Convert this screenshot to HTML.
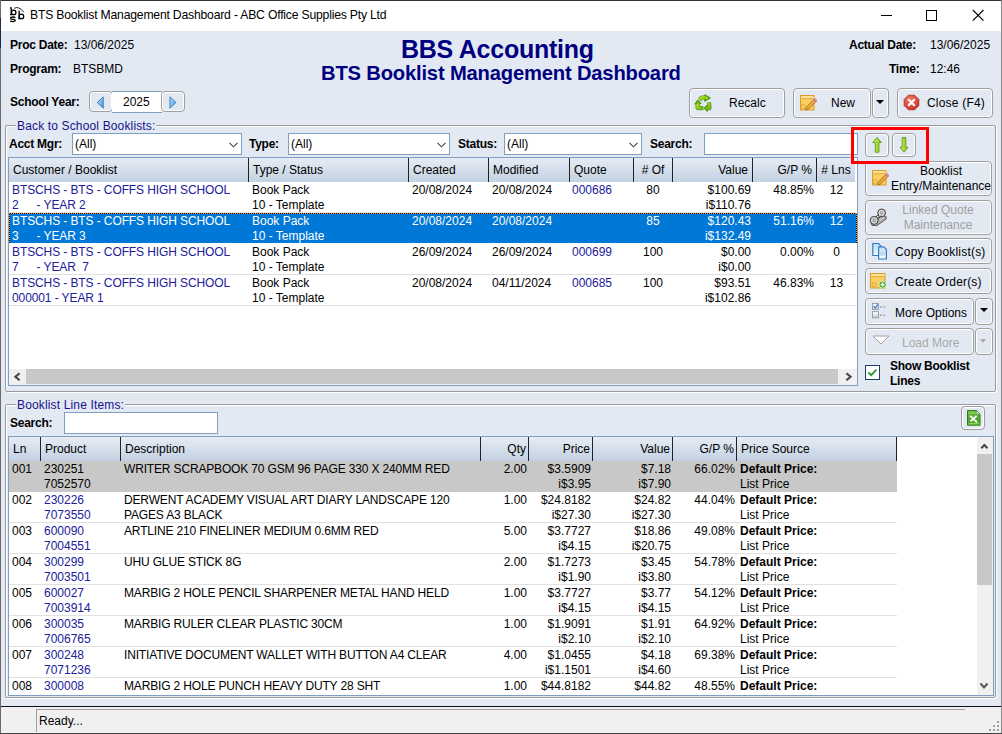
<!DOCTYPE html>
<html><head><meta charset="utf-8">
<style>
*{box-sizing:border-box;margin:0;padding:0}
html,body{width:1002px;height:734px;overflow:hidden;background:#3b4a5a}
body{position:relative;font-family:"Liberation Sans",sans-serif;font-size:12px;line-height:15px;color:#000}
.a{position:absolute;white-space:nowrap;margin-top:1px}
.bx{position:absolute}
.b{font-weight:bold;letter-spacing:-0.25px}
.navy{color:#000080}
.btn{position:absolute;border:1px solid #9E9E9E;border-radius:4px;background:#E3E9F3;box-shadow:inset 0 0 0 1px #fff}
.tb{position:absolute;background:#fff;border:1px solid #7E9EC2}
.grp{position:absolute;border:1px solid #9A9A9A;border-radius:2px;box-shadow:1px 1px 0 #fff,inset 1px 1px 0 #fff}
.cap{position:absolute;background:#E3E9F3;color:#14148C;padding:0 1px;line-height:15px;letter-spacing:0.15px}
.hdr{position:absolute;background:linear-gradient(#E6ECF4,#C3D1E2)}
.sep{position:absolute;width:1px;background:#222}
.r{text-align:right}
.c{text-align:center}
.blue{color:#20209A}
.dd{position:absolute;width:0;height:0;border-left:4px solid transparent;border-right:4px solid transparent;border-top:4px solid #000}
</style></head><body>
<div class="bx" style="left:0;top:0;width:1002px;height:1px;background:#333"></div>
<div class="bx" style="left:0;top:0;width:1px;height:734px;background:#6A6A6A"></div>
<div class="bx" style="left:0;top:18px;width:1px;height:30px;background:#1C2C4C"></div>
<div class="bx" style="left:1001px;top:0;width:1px;height:734px;background:#888"></div>
<div class="bx" style="left:0;top:733px;width:1002px;height:1px;background:#444"></div>
<!-- title bar -->
<div class="bx" style="left:1px;top:1px;width:1000px;height:30px;background:#fff"></div>
<svg class="bx" style="left:0;top:0" width="30" height="30" viewBox="0 0 30 30">
 <g fill="none" stroke="#000" stroke-width="1.3">
 <path d="M10 7.8 H11.2 V14.6 H10"/>
 <circle cx="13.7" cy="12.4" r="2.2"/>
 <circle cx="21.4" cy="16.4" r="2.3"/>
 <path d="M18.4 11.3 H19.2 V18.7 H18.2"/>
 <path d="M15.4 17.8 Q14.6 17 12.9 17 Q10.6 17 10.6 18.3 Q10.8 19.3 13 19.4 Q15.4 19.6 15.3 20.6 Q15 21.6 12.9 21.6 Q11 21.6 10.3 20.8"/>
 </g>
 <path d="M14.3 8.3 Q18.5 5.6 23.8 12.2" fill="none" stroke="#000" stroke-width="0.9"/>
</svg>
<div class="a" style="left:30px;top:7px;font-size:12.2px;letter-spacing:-0.2px">BTS Booklist Management Dashboard - ABC Office Supplies Pty Ltd</div>
<div class="bx" style="left:881px;top:15px;width:11px;height:1px;background:#000"></div>
<div class="bx" style="left:926px;top:10px;width:11px;height:11px;border:1px solid #000"></div>
<svg class="bx" style="left:972px;top:9px" width="13" height="13" viewBox="0 0 13 13"><path d="M0.8 1 L11.5 11.7 M11.5 1 L0.8 11.7" stroke="#000" stroke-width="1.1"/></svg>
<!-- client -->
<div class="bx" style="left:1px;top:31px;width:1000px;height:675px;background:#E3E9F3"></div>
<div class="a b" style="left:10px;top:37px">Proc Date:</div>
<div class="a" style="left:74px;top:37px">13/06/2025</div>
<div class="a b" style="left:10px;top:61px">Program:</div>
<div class="a" style="left:73px;top:61px">BTSBMD</div>
<div class="a b" style="left:10px;top:94px">School Year:</div>
<div class="btn" style="left:89px;top:91px;width:24px;height:21px;border-radius:4px"></div>
<svg class="bx" style="left:96px;top:96px" width="8" height="13" viewBox="0 0 8 13"><defs><linearGradient id="ga" x1="0" y1="0" x2="1" y2="1"><stop offset="0" stop-color="#B8DDF8"/><stop offset="1" stop-color="#4A95D4"/></linearGradient></defs><path d="M7.3 0.8 L1.2 6.5 L7.3 12.2 Z" fill="url(#ga)" stroke="#3A7FBF" stroke-width="0.9" stroke-linejoin="round"/></svg>
<div class="tb" style="left:112px;top:91px;width:50px;height:22px;border-left:none;border-right:none"></div>
<div class="a" style="left:123px;top:94px">2025</div>
<div class="btn" style="left:161px;top:91px;width:24px;height:21px"></div>
<svg class="bx" style="left:169px;top:96px" width="8" height="13" viewBox="0 0 8 13"><path d="M0.9 0.8 L7 6.5 L0.9 12.2 Z" fill="url(#ga)" stroke="#3A7FBF" stroke-width="0.9" stroke-linejoin="round"/></svg>

<div class="a navy" style="left:401px;top:34px;font-size:25px;line-height:28px;font-weight:bold;letter-spacing:-0.25px">BBS Accounting</div>
<div class="a navy" style="left:321px;top:60px;font-size:20.2px;line-height:24px;font-weight:bold;letter-spacing:-0.18px">BTS Booklist Management Dashboard</div>

<div class="a b" style="left:849px;top:37px">Actual Date:</div>
<div class="a" style="left:930px;top:37px">13/06/2025</div>
<div class="a b" style="left:889px;top:61px">Time:</div>
<div class="a" style="left:930px;top:61px">12:46</div>

<!-- buttons row -->
<div class="btn" style="left:689px;top:88px;width:96px;height:30px"></div>
<svg class="bx" style="left:692px;top:91px" width="22" height="22" viewBox="0 -0.5 22 22">
 <defs><linearGradient id="grc" x1="0" y1="0" x2="1" y2="1"><stop offset="0" stop-color="#B6EA1E"/><stop offset="1" stop-color="#74B812"/></linearGradient></defs>
 <g fill="none" stroke="#4C9408" stroke-width="4.2" stroke-linejoin="round" opacity="0.85">
  <path d="M7.6 8.6 L9.6 6 L13.6 6"/>
  <path d="M5.6 12.4 L5.6 16.6 L11.4 16.6"/>
  <path d="M17 10.8 L17.5 16.6 L15.4 16.6"/>
 </g>
 <g fill="#4C9408" stroke="#4C9408" stroke-width="1.2" stroke-linejoin="round">
  <path d="M13 3.4 L18 6.6 L12.8 9.6 Z"/>
  <path d="M3.2 12.4 L5.8 8.8 L8.8 12.2 Z"/>
  <path d="M15.2 13.8 L12.4 16.6 L15.2 19.6 Z"/>
 </g>
 <g fill="none" stroke="url(#grc)" stroke-width="2.4" stroke-linejoin="round">
  <path d="M7.6 8.6 L9.6 6 L13.6 6"/>
  <path d="M5.6 12.4 L5.6 16.6 L11.4 16.6"/>
  <path d="M17 10.8 L17.5 16.6 L15.4 16.6"/>
 </g>
 <g fill="#A6DE18">
  <path d="M13.6 4.6 L16.6 6.6 L13.4 8.4 Z"/>
  <path d="M4.4 12 L5.9 9.9 L7.6 11.9 Z"/>
  <path d="M14.6 15 L13.2 16.6 L14.6 18.2 Z"/>
 </g>
</svg>
<div class="a" style="left:729px;top:95px">Recalc</div>

<div class="btn" style="left:793px;top:88px;width:78px;height:30px"></div>
<svg class="bx" style="left:799px;top:94px" width="18" height="17" viewBox="0 0 18 17">
 <rect x="1.5" y="1.5" width="13.5" height="14.5" fill="#F9D060" stroke="#DA9A2E" stroke-width="1"/>
 <rect x="2" y="2" width="12.5" height="2.3" fill="#FCE296"/>
 <line x1="2.5" y1="4.6" x2="14" y2="4.6" stroke="#E0A640" stroke-width="0.9"/>
 <path d="M2.3 10.6 h3.3 v4.4 h-3.3 z" fill="none" stroke="#E0A640" stroke-width="0.8"/>
 <path d="M6.6 15.8 L7.3 13 L14.8 5.5 L16.9 7.6 L9.4 15.1 Z" fill="#F4A838" stroke="#8A5A22" stroke-width="0.7" stroke-linejoin="round"/>
 <path d="M14.8 5.5 L15.9 4.4 L18 6.5 L16.9 7.6 Z" fill="#E28AD0" stroke="#9A5A90" stroke-width="0.5"/>
</svg>
<div class="a" style="left:831px;top:95px">New</div>
<div class="btn" style="left:872px;top:88px;width:17px;height:30px"></div>
<div class="dd" style="left:876px;top:100px"></div>

<div class="btn" style="left:897px;top:88px;width:96px;height:30px"></div>
<svg class="bx" style="left:903px;top:94px" width="17" height="17" viewBox="0 0 17 17">
 <defs><radialGradient id="gr" cx="0.4" cy="0.3" r="0.75"><stop offset="0" stop-color="#F47A66"/><stop offset="1" stop-color="#CC2E22"/></radialGradient></defs>
 <path d="M5.4 1.2 L11.6 1.2 L15.8 5.4 L15.8 11.6 L11.6 15.8 L5.4 15.8 L1.2 11.6 L1.2 5.4 Z" fill="url(#gr)" stroke="#B03024" stroke-width="0.9"/>
 <path d="M5.8 5.8 L11.2 11.2 M11.2 5.8 L5.8 11.2" stroke="#fff" stroke-width="2.2" stroke-linecap="round"/>
</svg>
<div class="a" style="left:927px;top:95px;letter-spacing:0.2px">Close (F4)</div>

<!-- group 1 -->
<div class="grp" style="left:5px;top:125px;width:991px;height:267px"></div>
<div class="cap" style="left:16px;top:119px">Back to School Booklists:</div>
<div class="a b" style="left:9px;top:136px">Acct Mgr:</div>
<div class="tb" style="left:72px;top:133px;width:170px;height:22px"></div>
<div class="a" style="left:75px;top:136px">(All)</div>
<svg class="bx" style="left:229px;top:142px" width="9" height="6" viewBox="0 0 9 6"><path d="M0.5 0.8 L4.5 4.8 L8.5 0.8" fill="none" stroke="#444" stroke-width="1.1"/></svg>
<div class="a b" style="left:249px;top:136px">Type:</div>
<div class="tb" style="left:288px;top:133px;width:162px;height:22px"></div>
<div class="a" style="left:291px;top:136px">(All)</div>
<svg class="bx" style="left:437px;top:142px" width="9" height="6" viewBox="0 0 9 6"><path d="M0.5 0.8 L4.5 4.8 L8.5 0.8" fill="none" stroke="#444" stroke-width="1.1"/></svg>
<div class="a b" style="left:458px;top:136px">Status:</div>
<div class="tb" style="left:504px;top:133px;width:138px;height:22px"></div>
<div class="a" style="left:507px;top:136px">(All)</div>
<svg class="bx" style="left:629px;top:142px" width="9" height="6" viewBox="0 0 9 6"><path d="M0.5 0.8 L4.5 4.8 L8.5 0.8" fill="none" stroke="#444" stroke-width="1.1"/></svg>
<div class="a b" style="left:650px;top:136px">Search:</div>
<div class="tb" style="left:704px;top:133px;width:154px;height:22px"></div>

<div class="bx" style="left:8px;top:157px;width:850px;height:229px;background:#fff;border:1px solid #7E9EC2"></div>
<div class="hdr" style="left:9px;top:158px;width:846px;height:24px"></div>
<div class="a" style="left:13px;top:162px">Customer / Booklist</div>
<div class="sep" style="left:248px;top:158px;height:24px"></div>
<div class="a" style="left:253px;top:162px">Type / Status</div>
<div class="sep" style="left:408px;top:158px;height:24px"></div>
<div class="a" style="left:413px;top:162px">Created</div>
<div class="sep" style="left:488px;top:158px;height:24px"></div>
<div class="a" style="left:493px;top:162px">Modified</div>
<div class="sep" style="left:569px;top:158px;height:24px"></div>
<div class="a" style="left:574px;top:162px">Quote</div>
<div class="sep" style="left:633px;top:158px;height:24px"></div>
<div class="a c" style="left:634px;width:38px;top:162px"># Of</div>
<div class="sep" style="left:672px;top:158px;height:24px"></div>
<div class="a r" style="left:673px;width:75px;top:162px">Value</div>
<div class="sep" style="left:752px;top:158px;height:24px"></div>
<div class="a r" style="left:753px;width:59px;top:162px">G/P %</div>
<div class="sep" style="left:816px;top:158px;height:24px"></div>
<div class="a c" style="left:817px;width:38px;top:162px"># Lns</div>
<div class="bx" style="left:9px;top:212px;width:847px;height:1px;background:#E1E1E1"></div>
<div class="a" style="left:12px;top:182px;color:#20209A;letter-spacing:-0.1px">BTSCHS - BTS - COFFS HIGH SCHOOL<br>2<span style="margin-left:18px">- YEAR 2</span></div>
<div class="a" style="left:252px;top:182px;color:#000">Book Pack<br>10 - Template</div>
<div class="a" style="left:412px;top:182px;color:#000">20/08/2024</div>
<div class="a" style="left:492px;top:182px;color:#000">20/08/2024</div>
<div class="a" style="left:572px;top:182px;color:#20209A">000686</div>
<div class="a c" style="left:633px;width:40px;top:182px;color:#000">80</div>
<div class="a r" style="left:673px;width:78px;top:182px;color:#000">$100.69<br>i$110.76</div>
<div class="a r" style="left:753px;width:61px;top:182px;color:#000">48.85%</div>
<div class="a c" style="left:817px;width:39px;top:182px;color:#000">12</div>
<div class="bx" style="left:9px;top:213px;width:848px;height:30px;background:#0078D7"></div>
<div class="bx" style="left:9px;top:213px;width:848px;height:1px;background:repeating-linear-gradient(90deg,#FF9F3F 0 1px,#000 1px 2px)"></div>
<div class="bx" style="left:9px;top:213px;width:1px;height:30px;background:repeating-linear-gradient(180deg,#FF9F3F 0 1px,#000 1px 2px)"></div>
<div class="bx" style="left:856px;top:213px;width:1px;height:30px;background:repeating-linear-gradient(180deg,#FF9F3F 0 1px,#000 1px 2px)"></div>
<div class="a" style="left:12px;top:213px;color:#fff;letter-spacing:-0.1px">BTSCHS - BTS - COFFS HIGH SCHOOL<br>3<span style="margin-left:18px">- YEAR 3</span></div>
<div class="a" style="left:252px;top:213px;color:#fff">Book Pack<br>10 - Template</div>
<div class="a" style="left:412px;top:213px;color:#fff">20/08/2024</div>
<div class="a" style="left:492px;top:213px;color:#fff">20/08/2024</div>
<div class="a" style="left:572px;top:213px;color:#fff"></div>
<div class="a c" style="left:633px;width:40px;top:213px;color:#fff">85</div>
<div class="a r" style="left:673px;width:78px;top:213px;color:#fff">$120.43<br>i$132.49</div>
<div class="a r" style="left:753px;width:61px;top:213px;color:#fff">51.16%</div>
<div class="a c" style="left:817px;width:39px;top:213px;color:#fff">12</div>
<div class="bx" style="left:9px;top:274px;width:847px;height:1px;background:#E1E1E1"></div>
<div class="a" style="left:12px;top:244px;color:#20209A;letter-spacing:-0.1px">BTSCHS - BTS - COFFS HIGH SCHOOL<br>7<span style="margin-left:18px">- YEAR&nbsp;&nbsp;7</span></div>
<div class="a" style="left:252px;top:244px;color:#000">Book Pack<br>10 - Template</div>
<div class="a" style="left:412px;top:244px;color:#000">26/09/2024</div>
<div class="a" style="left:492px;top:244px;color:#000">26/09/2024</div>
<div class="a" style="left:572px;top:244px;color:#20209A">000699</div>
<div class="a c" style="left:633px;width:40px;top:244px;color:#000">100</div>
<div class="a r" style="left:673px;width:78px;top:244px;color:#000">$0.00<br>i$0.00</div>
<div class="a r" style="left:753px;width:61px;top:244px;color:#000">0.00%</div>
<div class="a c" style="left:817px;width:39px;top:244px;color:#000">0</div>
<div class="bx" style="left:9px;top:305px;width:847px;height:1px;background:#E1E1E1"></div>
<div class="a" style="left:12px;top:275px;color:#20209A;letter-spacing:-0.1px">BTSCHS - BTS - COFFS HIGH SCHOOL<br>000001 - YEAR 1</div>
<div class="a" style="left:252px;top:275px;color:#000">Book Pack<br>10 - Template</div>
<div class="a" style="left:412px;top:275px;color:#000">20/08/2024</div>
<div class="a" style="left:492px;top:275px;color:#000">04/11/2024</div>
<div class="a" style="left:572px;top:275px;color:#20209A">000685</div>
<div class="a c" style="left:633px;width:40px;top:275px;color:#000">100</div>
<div class="a r" style="left:673px;width:78px;top:275px;color:#000">$93.51<br>i$102.86</div>
<div class="a r" style="left:753px;width:61px;top:275px;color:#000">46.83%</div>
<div class="a c" style="left:817px;width:39px;top:275px;color:#000">13</div>
<div class="bx" style="left:9px;top:369px;width:848px;height:16px;background:#F0F0F0"></div>
<div class="bx" style="left:26px;top:369px;width:812px;height:15px;background:#C8C8C8"></div>
<svg class="bx" style="left:13px;top:372px" width="9" height="10" viewBox="0 0 9 10"><path d="M6.6 1.3 L2.4 4.8 L6.6 8.3" fill="none" stroke="#444" stroke-width="2.1"/></svg>
<svg class="bx" style="left:844px;top:372px" width="9" height="10" viewBox="0 0 9 10"><path d="M2.4 1.3 L6.6 4.8 L2.4 8.3" fill="none" stroke="#444" stroke-width="2.1"/></svg>
<!-- right side buttons -->
<div class="btn" style="left:865px;top:133px;width:24px;height:24px"></div>
<svg class="bx" style="left:871px;top:137px" width="12" height="17" viewBox="0 0 12 17"><defs><linearGradient id="gg" x1="0" y1="0" x2="1" y2="0"><stop offset="0" stop-color="#D8F25A"/><stop offset="1" stop-color="#7CC21A"/></linearGradient></defs><path d="M6.1 0.5 L10.4 5.4 L7.9 5.4 L7.9 15.2 L4.3 15.2 L4.3 5.4 L1.8 5.4 Z" fill="url(#gg)" stroke="#5C9A12" stroke-width="0.9" stroke-linejoin="round"/></svg>
<div class="btn" style="left:892px;top:133px;width:24px;height:24px"></div>
<svg class="bx" style="left:898px;top:137px" width="12" height="17" viewBox="0 0 12 17"><path d="M4.2 0.5 L7.8 0.5 L7.8 10.2 L10 10.2 L6 15.3 L2 10.2 L4.2 10.2 Z" fill="url(#gg)" stroke="#5C9A12" stroke-width="0.9" stroke-linejoin="round"/></svg>
<div class="bx" style="left:851px;top:127px;width:78px;height:37px;border:3px solid #FF0000;z-index:5"></div>

<div class="btn" style="left:865px;top:161px;width:127px;height:35px"></div>
<svg class="bx" style="left:871px;top:169px" width="18" height="17" viewBox="0 0 18 17">
 <rect x="1.5" y="1.5" width="13.5" height="14.5" fill="#F9D060" stroke="#DA9A2E" stroke-width="1"/>
 <rect x="2" y="2" width="12.5" height="2.3" fill="#FCE296"/>
 <line x1="2.5" y1="4.6" x2="14" y2="4.6" stroke="#E0A640" stroke-width="0.9"/>
 <path d="M2.3 10.6 h3.3 v4.4 h-3.3 z" fill="none" stroke="#E0A640" stroke-width="0.8"/>
 <path d="M6.6 15.8 L7.3 13 L14.8 5.5 L16.9 7.6 L9.4 15.1 Z" fill="#F4A838" stroke="#8A5A22" stroke-width="0.7" stroke-linejoin="round"/>
 <path d="M14.8 5.5 L15.9 4.4 L18 6.5 L16.9 7.6 Z" fill="#E28AD0" stroke="#9A5A90" stroke-width="0.5"/>
</svg>
<div class="a c" style="left:889px;top:163px;width:104px">Booklist<br>Entry/Maintenance</div>

<div class="btn" style="left:865px;top:200px;width:127px;height:35px"></div>
<svg class="bx" style="left:869px;top:208px" width="18" height="18" viewBox="0 0 18 18">
 <path d="M2 14.5 L12 7 L17 8.5 L17.2 11 L8 17.4 L3 17.4 Z" fill="#B4B4B4" stroke="#4A4A4A" stroke-width="0.9" stroke-linejoin="round"/>
 <path d="M4 15.5 L15 9.5" stroke="#E8E8E8" stroke-width="0.8" stroke-dasharray="1 1"/>
 <circle cx="5.2" cy="12.4" r="4" fill="#D4D4D4" stroke="#3E3E3E" stroke-width="1"/>
 <circle cx="12.6" cy="4.9" r="3.9" fill="#D4D4D4" stroke="#3E3E3E" stroke-width="1"/>
 <path d="M6.6 9.2 L10 6.2 M8.6 11 L12.4 8" stroke="#3E3E3E" stroke-width="1"/>
 <path d="M7.2 10.6 L11.2 7" stroke="#F4F4F4" stroke-width="1" stroke-dasharray="1 1"/>
 <circle cx="5.2" cy="12.4" r="1.6" fill="#8A8A8A"/><circle cx="5.2" cy="12.4" r="0.7" fill="#fff"/>
 <circle cx="12.6" cy="4.9" r="1.6" fill="#8A8A8A"/><circle cx="12.6" cy="4.9" r="0.7" fill="#fff"/>
</svg>
<div class="a c" style="left:889px;top:202px;width:98px;color:#A0A0A0">Linked Quote<br>Maintenance</div>

<div class="btn" style="left:865px;top:238px;width:127px;height:26px"></div>
<svg class="bx" style="left:871px;top:242px" width="18" height="18" viewBox="0 0 18 18">
 <defs><linearGradient id="gd" x1="0" y1="0" x2="0" y2="1"><stop offset="0" stop-color="#C4DDF4"/><stop offset="0.6" stop-color="#DCEBF8"/><stop offset="1" stop-color="#FFFFFF"/></linearGradient></defs>
 <path d="M1.8 1.5 h5.6 l2.6 2.6 v9.4 h-8.2 z" fill="url(#gd)" stroke="#2F7CC0" stroke-width="1.2" stroke-linejoin="round"/>
 <path d="M7.6 4.8 h5.2 l2.6 2.6 v9.6 h-7.8 z" fill="url(#gd)" stroke="#2F7CC0" stroke-width="1.2" stroke-linejoin="round"/>
 <path d="M9.2 11 h4.6 M9.2 13 h4.6" stroke="#9CC4E8" stroke-width="0.8"/>
</svg>
<div class="a" style="left:895px;top:244px;letter-spacing:0.2px">Copy Booklist(s)</div>

<div class="btn" style="left:865px;top:268px;width:127px;height:26px"></div>
<svg class="bx" style="left:869px;top:272px" width="18" height="18" viewBox="0 0 18 18">
 <rect x="1.5" y="1.5" width="14.5" height="14.5" fill="#F9D060" stroke="#DA9A2E" stroke-width="1"/>
 <rect x="2" y="2" width="13.5" height="2.2" fill="#FCE296"/>
 <line x1="2.5" y1="4.6" x2="15" y2="4.6" stroke="#E0A640" stroke-width="0.9"/>
 <path d="M3.3 11 h3.6 v3.8 h-3.6 z" fill="none" stroke="#E0A640" stroke-width="0.8"/>
 <circle cx="13.6" cy="12.6" r="3.6" fill="#52A82A" stroke="#E8F4D8" stroke-width="0.8"/>
 <path d="M13.6 10.6 v4 M11.6 12.6 h4" stroke="#fff" stroke-width="1.4"/>
</svg>
<div class="a" style="left:895px;top:274px;letter-spacing:0.18px">Create Order(s)</div>

<div class="btn" style="left:865px;top:298px;width:109px;height:27px"></div>
<svg class="bx" style="left:871px;top:302px" width="16" height="18" viewBox="0 0 16 18">
 <defs><linearGradient id="gc" x1="0" y1="0" x2="0" y2="1"><stop offset="0" stop-color="#FFFFFF"/><stop offset="1" stop-color="#C6CED8"/></linearGradient></defs>
 <rect x="1.5" y="1.5" width="6" height="6" fill="url(#gc)" stroke="#8D99A8" stroke-width="0.9"/>
 <path d="M2.6 4.4 l1.6 1.6 l2.8-3.6" fill="none" stroke="#2C6FC8" stroke-width="1.1"/>
 <rect x="1.5" y="9.6" width="6" height="6.2" fill="url(#gc)" stroke="#8D99A8" stroke-width="0.9"/>
 <path d="M9 5 h2 M12.2 5 h2 M9 13.2 h2 M12.2 13.2 h2" stroke="#8C8C8C" stroke-width="1"/>
</svg>
<div class="a" style="left:895px;top:305px">More Options</div>
<div class="btn" style="left:975px;top:298px;width:18px;height:27px"></div>
<div class="dd" style="left:980px;top:308px"></div>

<div class="btn" style="left:865px;top:328px;width:109px;height:27px"></div>
<svg class="bx" style="left:872px;top:335px" width="18" height="10" viewBox="0 0 18 10"><path d="M1 1 L17 1 L9 9 Z" fill="#fff" stroke="#999" stroke-width="0.9"/></svg>
<div class="a" style="left:902px;top:335px;color:#A8A8A8">Load More</div>
<div class="btn" style="left:975px;top:328px;width:18px;height:27px"></div>
<div class="dd" style="left:980px;top:339px;border-top-color:#A8A8A8;border-left-width:3.5px;border-right-width:3.5px;border-top-width:4px"></div>

<div class="bx" style="left:865px;top:365px;width:15px;height:15px;background:#fff;border:1px solid #1E3E66"></div>
<svg class="bx" style="left:867px;top:368px" width="11" height="9" viewBox="0 0 11 9"><path d="M1.5 4.5 L4.2 7.2 L9.5 1.5" fill="none" stroke="#1E9A28" stroke-width="1.8"/></svg>
<div class="a b" style="left:890px;top:358px">Show Booklist<br>Lines</div>

<!-- group 2 -->
<div class="grp" style="left:5px;top:404px;width:991px;height:294px"></div>
<div class="cap" style="left:16px;top:398px">Booklist Line Items:</div>
<div class="a b" style="left:10px;top:415px">Search:</div>
<div class="tb" style="left:64px;top:412px;width:154px;height:22px"></div>
<div class="btn" style="left:961px;top:406px;width:24px;height:24px"></div>
<svg class="bx" style="left:966px;top:409px" width="16" height="18" viewBox="0 0 16 18">
 <defs><linearGradient id="gx" x1="0" y1="0" x2="0" y2="1"><stop offset="0" stop-color="#6DB83A"/><stop offset="1" stop-color="#48A020"/></linearGradient></defs>
 <path d="M1.5 1.5 H10.3 L14 5.2 V16.2 H1.5 Z" fill="url(#gx)" stroke="#2F7E14" stroke-width="1"/>
 <path d="M10.3 1.5 V5.2 H14 Z" fill="#fff" stroke="#2F7E14" stroke-width="0.6"/>
 <rect x="2.4" y="2.4" width="7" height="2.6" fill="#86C45C"/>
 <rect x="2.4" y="14" width="10.8" height="1.4" fill="#8ED068"/>
 <path d="M4.2 6.8 L11 13.4 M10.6 6.8 L4.4 12.4" stroke="#fff" stroke-width="1.8"/>
</svg>

<div class="bx" style="left:8px;top:436px;width:986px;height:260px;background:#fff;border:1px solid #7E9EC2"></div>
<div class="hdr" style="left:9px;top:437px;width:888px;height:24px"></div>
<div class="a" style="left:13px;top:441px">Ln</div>
<div class="sep" style="left:40px;top:437px;height:24px"></div>
<div class="a" style="left:45px;top:441px">Product</div>
<div class="sep" style="left:120px;top:437px;height:24px"></div>
<div class="a" style="left:125px;top:441px">Description</div>
<div class="sep" style="left:480px;top:437px;height:24px"></div>
<div class="a r" style="left:481px;width:45px;top:441px">Qty</div>
<div class="sep" style="left:528px;top:437px;height:24px"></div>
<div class="a r" style="left:529px;width:61px;top:441px">Price</div>
<div class="sep" style="left:592px;top:437px;height:24px"></div>
<div class="a r" style="left:593px;width:77px;top:441px">Value</div>
<div class="sep" style="left:672px;top:437px;height:24px"></div>
<div class="a r" style="left:673px;width:61px;top:441px">G/P %</div>
<div class="sep" style="left:736px;top:437px;height:24px"></div>
<div class="a" style="left:741px;top:441px">Price Source</div>
<div class="sep" style="left:896px;top:437px;height:24px"></div>
<div class="bx" style="left:9px;top:461px;width:968px;height:234px;overflow:hidden">
<div class="bx" style="left:0;top:0px;width:888px;height:31px;background:#C8C8C8"></div>
<div class="a" style="left:3px;top:0px">001</div>
<div class="a" style="left:35px;top:0px;color:#000">230251<br>7052570</div>
<div class="a" style="left:115px;top:0px;letter-spacing:-0.16px">WRITER SCRAPBOOK 70 GSM 96 PAGE 330 X 240MM RED</div>
<div class="a r" style="left:472px;width:46px;top:0px">2.00</div>
<div class="a r" style="left:520px;width:62px;top:0px">$3.5909<br>i$3.95</div>
<div class="a r" style="left:584px;width:78px;top:0px">$7.18<br>i$7.90</div>
<div class="a r" style="left:664px;width:62px;top:0px">66.02%</div>
<div class="a" style="left:731px;top:0px"><b>Default Price:</b><br>List Price</div>
<div class="bx" style="left:0;top:61px;width:888px;height:1px;background:#E1E1E1"></div>
<div class="a" style="left:3px;top:31px">002</div>
<div class="a" style="left:35px;top:31px;color:#20209A">230226<br>7073550</div>
<div class="a" style="left:115px;top:31px;letter-spacing:-0.16px">DERWENT ACADEMY VISUAL ART DIARY LANDSCAPE 120<br>PAGES A3 BLACK</div>
<div class="a r" style="left:472px;width:46px;top:31px">1.00</div>
<div class="a r" style="left:520px;width:62px;top:31px">$24.8182<br>i$27.30</div>
<div class="a r" style="left:584px;width:78px;top:31px">$24.82<br>i$27.30</div>
<div class="a r" style="left:664px;width:62px;top:31px">44.04%</div>
<div class="a" style="left:731px;top:31px"><b>Default Price:</b><br>List Price</div>
<div class="bx" style="left:0;top:92px;width:888px;height:1px;background:#E1E1E1"></div>
<div class="a" style="left:3px;top:62px">003</div>
<div class="a" style="left:35px;top:62px;color:#20209A">600090<br>7004551</div>
<div class="a" style="left:115px;top:62px;letter-spacing:-0.16px">ARTLINE 210 FINELINER MEDIUM 0.6MM RED</div>
<div class="a r" style="left:472px;width:46px;top:62px">5.00</div>
<div class="a r" style="left:520px;width:62px;top:62px">$3.7727<br>i$4.15</div>
<div class="a r" style="left:584px;width:78px;top:62px">$18.86<br>i$20.75</div>
<div class="a r" style="left:664px;width:62px;top:62px">49.08%</div>
<div class="a" style="left:731px;top:62px"><b>Default Price:</b><br>List Price</div>
<div class="bx" style="left:0;top:123px;width:888px;height:1px;background:#E1E1E1"></div>
<div class="a" style="left:3px;top:93px">004</div>
<div class="a" style="left:35px;top:93px;color:#20209A">300299<br>7003501</div>
<div class="a" style="left:115px;top:93px;letter-spacing:-0.16px">UHU GLUE STICK 8G</div>
<div class="a r" style="left:472px;width:46px;top:93px">2.00</div>
<div class="a r" style="left:520px;width:62px;top:93px">$1.7273<br>i$1.90</div>
<div class="a r" style="left:584px;width:78px;top:93px">$3.45<br>i$3.80</div>
<div class="a r" style="left:664px;width:62px;top:93px">54.78%</div>
<div class="a" style="left:731px;top:93px"><b>Default Price:</b><br>List Price</div>
<div class="bx" style="left:0;top:154px;width:888px;height:1px;background:#E1E1E1"></div>
<div class="a" style="left:3px;top:124px">005</div>
<div class="a" style="left:35px;top:124px;color:#20209A">600027<br>7003914</div>
<div class="a" style="left:115px;top:124px;letter-spacing:-0.16px">MARBIG 2 HOLE PENCIL SHARPENER METAL HAND HELD</div>
<div class="a r" style="left:472px;width:46px;top:124px">1.00</div>
<div class="a r" style="left:520px;width:62px;top:124px">$3.7727<br>i$4.15</div>
<div class="a r" style="left:584px;width:78px;top:124px">$3.77<br>i$4.15</div>
<div class="a r" style="left:664px;width:62px;top:124px">54.12%</div>
<div class="a" style="left:731px;top:124px"><b>Default Price:</b><br>List Price</div>
<div class="bx" style="left:0;top:185px;width:888px;height:1px;background:#E1E1E1"></div>
<div class="a" style="left:3px;top:155px">006</div>
<div class="a" style="left:35px;top:155px;color:#20209A">300035<br>7006765</div>
<div class="a" style="left:115px;top:155px;letter-spacing:-0.16px">MARBIG RULER CLEAR PLASTIC 30CM</div>
<div class="a r" style="left:472px;width:46px;top:155px">1.00</div>
<div class="a r" style="left:520px;width:62px;top:155px">$1.9091<br>i$2.10</div>
<div class="a r" style="left:584px;width:78px;top:155px">$1.91<br>i$2.10</div>
<div class="a r" style="left:664px;width:62px;top:155px">64.92%</div>
<div class="a" style="left:731px;top:155px"><b>Default Price:</b><br>List Price</div>
<div class="bx" style="left:0;top:216px;width:888px;height:1px;background:#E1E1E1"></div>
<div class="a" style="left:3px;top:186px">007</div>
<div class="a" style="left:35px;top:186px;color:#20209A">300248<br>7071236</div>
<div class="a" style="left:115px;top:186px;letter-spacing:-0.16px">INITIATIVE DOCUMENT WALLET WITH BUTTON A4 CLEAR</div>
<div class="a r" style="left:472px;width:46px;top:186px">4.00</div>
<div class="a r" style="left:520px;width:62px;top:186px">$1.0455<br>i$1.1501</div>
<div class="a r" style="left:584px;width:78px;top:186px">$4.18<br>i$4.60</div>
<div class="a r" style="left:664px;width:62px;top:186px">69.38%</div>
<div class="a" style="left:731px;top:186px"><b>Default Price:</b><br>List Price</div>
<div class="bx" style="left:0;top:247px;width:888px;height:1px;background:#E1E1E1"></div>
<div class="a" style="left:3px;top:217px">008</div>
<div class="a" style="left:35px;top:217px;color:#20209A">300008<br></div>
<div class="a" style="left:115px;top:217px;letter-spacing:-0.16px">MARBIG 2 HOLE PUNCH HEAVY DUTY 28 SHT</div>
<div class="a r" style="left:472px;width:46px;top:217px">1.00</div>
<div class="a r" style="left:520px;width:62px;top:217px">$44.8182<br></div>
<div class="a r" style="left:584px;width:78px;top:217px">$44.82<br></div>
<div class="a r" style="left:664px;width:62px;top:217px">48.55%</div>
<div class="a" style="left:731px;top:217px"><b>Default Price:</b><br>List Price</div>
</div>
<div class="bx" style="left:977px;top:437px;width:16px;height:258px;background:#F0F0F0"></div>
<div class="bx" style="left:977px;top:454px;width:15px;height:131px;background:#C8C8C8"></div>
<svg class="bx" style="left:979px;top:442px" width="11" height="9" viewBox="0 0 11 9"><path d="M2.3 6.3 L5.4 3 L8.5 6.3" fill="none" stroke="#444" stroke-width="2"/></svg>
<svg class="bx" style="left:979px;top:682px" width="10" height="8" viewBox="0 0 10 8"><path d="M1.5 1.5 L5 5.5 L8.5 1.5" fill="none" stroke="#555" stroke-width="2"/></svg>
<!-- status bar -->
<div class="bx" style="left:1px;top:706px;width:1000px;height:1px;background:#111"></div>
<div class="bx" style="left:1px;top:707px;width:1000px;height:26px;background:#F0F0F0"></div>
<div class="bx" style="left:36px;top:709px;width:929px;height:23px;border-left:1px solid #A0A0A0;border-top:1px solid #A0A0A0"></div>
<div class="a" style="left:39px;top:713px">Ready...</div>
<svg class="bx" style="left:988px;top:720px" width="12" height="12" viewBox="0 0 12 12"><g fill="#A0A0A0"><rect x="9" y="1" width="2" height="2"/><rect x="5" y="5" width="2" height="2"/><rect x="9" y="5" width="2" height="2"/><rect x="1" y="9" width="2" height="2"/><rect x="5" y="9" width="2" height="2"/><rect x="9" y="9" width="2" height="2"/></g></svg>

</body></html>
